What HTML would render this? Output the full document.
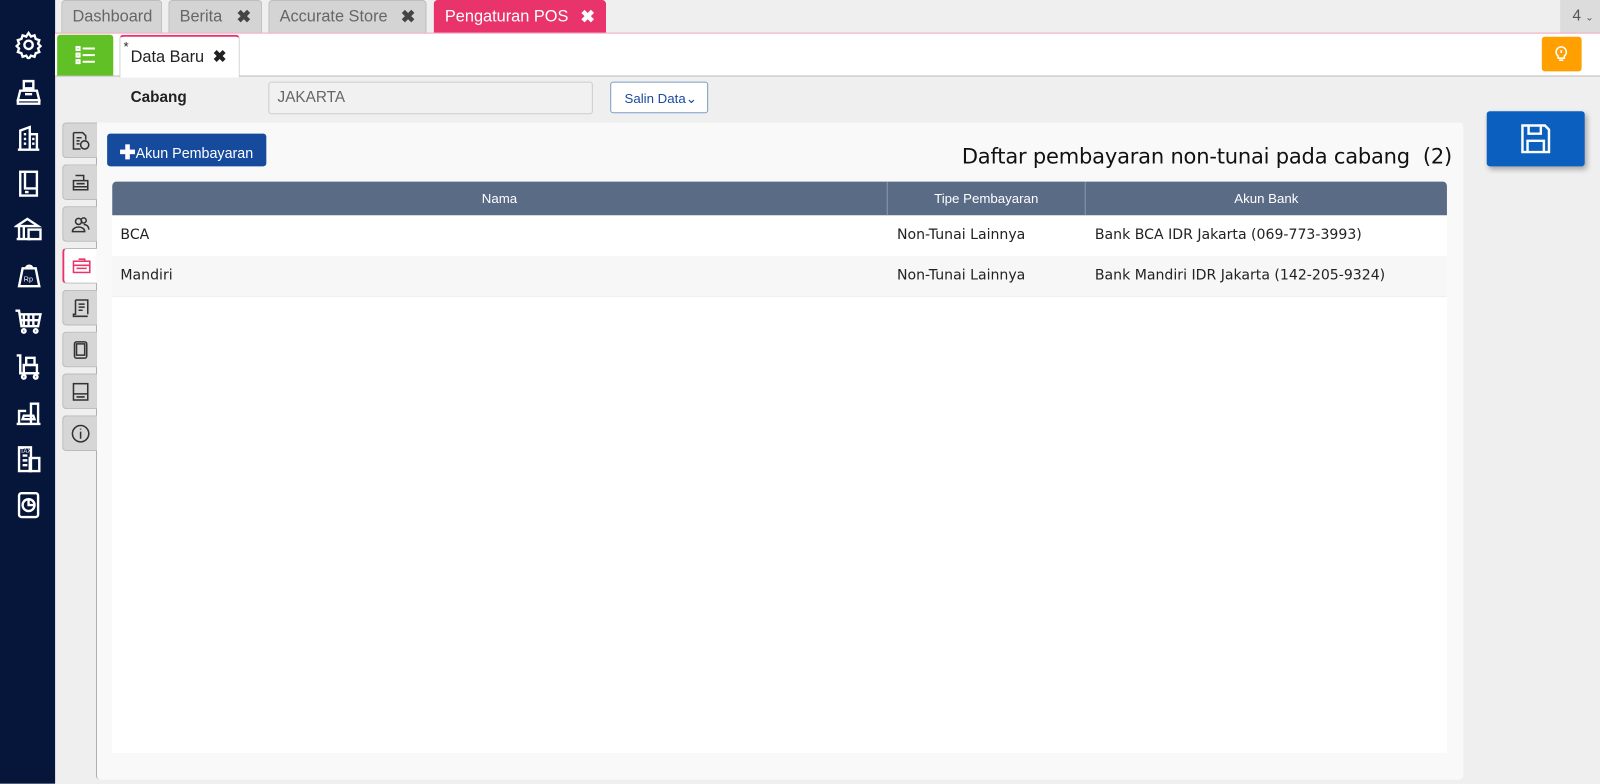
<!DOCTYPE html>
<html><head><meta charset="utf-8"><style>
*{box-sizing:border-box;margin:0;padding:0}
html,body{width:1600px;height:784px;overflow:hidden;background:#efefef}
#w{position:absolute;left:0;top:0;width:1568px;height:768px;transform:scale(1.020408);transform-origin:0 0;font-family:"Liberation Sans",sans-serif}
.abs{position:absolute}
.side{left:0;top:0;width:54px;height:768px;background:#06153a}
.side svg{position:absolute;left:14px;width:28px;height:28px;fill:none;stroke:#fff;stroke-width:2}
.tab{top:0;height:32px;background:#d4d4d4;border:1px solid #bdbdbd;border-bottom:none;border-radius:4px 4px 0 0;color:#666;font-size:16px;line-height:32px;padding-left:10px}
.tab b{position:absolute;right:10px;top:0;font-size:17px;color:#444}
.stab{left:61px;width:34px;height:35px;background:#d6d6d6;border:1px solid #bbb;border-right:none;border-radius:4px 0 0 4px}
.stab svg{position:absolute;left:7px;top:7px;width:20px;height:20px;fill:none;stroke:#333;stroke-width:1.5}
.td{position:absolute;color:#222;font-family:"DejaVu Sans","Liberation Sans",sans-serif;font-size:13.8px}
</style></head><body><div id="w">
<div class="abs side">
<svg style="top:30px" viewBox="0 0 24 24"><circle cx="12" cy="12" r="3.5"/><path d="M12 2l2 3 3-1 1 3 3 1-1 3 2 2-2 2 1 3-3 1-1 3-3-1-2 3-2-3-3 1-1-3-3-1 1-3-2-2 2-2-1-3 3-1 1-3 3 1z"/></svg>
<svg style="top:76px" viewBox="0 0 24 24"><path d="M8 3h8v6H8zM5 11h14l2 8H3zM3 19h18v3H3z"/><path d="M9 14h6"/></svg>
<svg style="top:121px" viewBox="0 0 24 24"><path d="M3 22h18M5 22V6l8-3v19M13 9h6v13M8 9h2M8 13h2M8 17h2M15 13h2M15 17h2"/></svg>
<svg style="top:166px" viewBox="0 0 24 24"><rect x="5" y="2" width="14" height="20"/><path d="M9 2v14h10M9 19h3"/></svg>
<svg style="top:211px" viewBox="0 0 24 24"><path d="M2 9l9-6 9 6zM4 9v10M8 9v10M2 20h12"/><rect x="12" y="12" width="10" height="8"/></svg>
<svg style="top:256px" viewBox="0 0 24 24"><path d="M7 6h11l3 15H4z"/><path d="M10 6c0-3 5-3 5 0"/><text x="8" y="17" font-size="6" fill="#fff" stroke="none" font-family="Liberation Sans">Rp</text></svg>
<svg style="top:301px" viewBox="0 0 24 24"><path d="M1 3h3l2 13h14l2-10H5M8 6v10M12 6v10M16 6v10M5 11h16"/><circle cx="8" cy="20" r="1.5"/><circle cx="18" cy="20" r="1.5"/></svg>
<svg style="top:346px" viewBox="0 0 24 24"><path d="M2 2h3v15h16"/><rect x="8" y="10" width="11" height="7"/><rect x="10" y="4" width="7" height="6"/><circle cx="8" cy="20" r="1.5"/><circle cx="18" cy="20" r="1.5"/></svg>
<svg style="top:391px" viewBox="0 0 24 24"><path d="M2 21h20M4 21V10h6M14 21V4h6v17"/><path d="M7 17h10l-1-3H8z"/></svg>
<svg style="top:436px" viewBox="0 0 24 24"><path d="M4 2h10v20H4zM7 9h4M7 13h4M7 17h4"/><rect x="13" y="11" width="8" height="11"/><text x="5" y="7" font-size="5" fill="#fff" stroke="none" font-family="Liberation Sans">TAX</text></svg>
<svg style="top:481px" viewBox="0 0 24 24"><rect x="4" y="2" width="16" height="20" rx="2"/><circle cx="12" cy="12" r="5"/><path d="M12 7v5h5"/></svg>
</div>
<div class="abs tab" style="left:60px;width:99px">Dashboard</div>
<div class="abs tab" style="left:165px;width:92px">Berita<b>✖</b></div>
<div class="abs tab" style="left:263px;width:155px">Accurate Store<b>✖</b></div>
<div class="abs tab" style="left:425px;width:169px;background:#e8336b;border-color:#e8336b;color:#fff">Pengaturan POS<b style="color:#fff">✖</b></div>
<div class="abs" style="left:1529px;top:0;width:40px;height:32px;background:#dcdcdc;color:#555;font-size:15px;line-height:32px;padding-left:12px">4 <span style="font-size:10px">⌄</span></div>
<div class="abs" style="left:54px;top:32px;width:1515px;height:1px;background:#f0a0b8"></div>
<div class="abs" style="left:54px;top:33px;width:1515px;height:42px;background:#fff;border-bottom:1px solid #bbb"></div>
<div class="abs" style="left:56px;top:34px;width:55px;height:40px;background:#60c025;border-radius:3px 3px 0 0">
<svg style="position:absolute;left:18px;top:11px" width="20" height="18" viewBox="0 0 20 18" fill="none" stroke="#fff" stroke-width="2"><rect x="1" y="1" width="3" height="3"/><rect x="1" y="7.5" width="3" height="3"/><rect x="1" y="14" width="3" height="3"/><path d="M7 2.5h12M7 9h12M7 15.5h12"/></svg></div>
<div class="abs" style="left:117px;top:34px;width:118px;height:42px;background:#fff;border:1px solid #ccc;border-top:2px solid #e8336b;border-bottom:none;border-radius:4px 4px 0 0;font-size:16px;color:#222;padding:10px 0 0 10px"><span style="position:absolute;left:3px;top:2px;font-size:13px">*</span>Data Baru <b style="margin-left:4px">✖</b></div>
<div class="abs" style="left:1511px;top:36px;width:39px;height:34px;background:#ffa000;border-radius:3px">
<svg style="position:absolute;left:12px;top:9px" width="14" height="16" viewBox="0 0 14 16" fill="none" stroke="#fff" stroke-width="1.6"><path d="M7 1a5 5 0 0 0-3 9v2h6v-2a5 5 0 0 0-3-9zM5 14h4M7 4v3"/></svg></div>
<div class="abs" style="left:128px;top:87px;font-size:15px;font-weight:bold;color:#222">Cabang</div>
<div class="abs" style="left:263px;top:80px;width:318px;height:32px;background:#f1f1f1;border:1px solid #ccc;border-radius:3px;font-size:15px;color:#666;padding:6px 8px">JAKARTA</div>
<div class="abs" style="left:598px;top:80px;width:96px;height:31px;background:#fff;border:1px solid #7a9cc8;border-radius:3px;font-size:13px;color:#1a4a9c;padding:8px 0 0 13px">Salin Data⌄</div>
<div class="abs" style="left:1457px;top:109px;width:96px;height:54px;background:#0b5fbf;border-radius:3px;box-shadow:2px 3px 5px rgba(0,0,0,.3)">
<svg style="position:absolute;left:33px;top:12px" width="30" height="30" viewBox="0 0 30 30" fill="none" stroke="#fff" stroke-width="2.4"><path d="M2 2h22l4 4v22H2z"/><path d="M8 2v8h12V2M7 28V17h16v11"/></svg></div>
<div class="abs" style="left:94px;top:120px;width:1340px;height:644px;background:#f9f9f9;border-left:1px solid #aaa;border-radius:0 4px 4px 4px"></div>
<div class="abs stab" style="top:120px"><svg viewBox="0 0 20 20"><path d="M3 2h9l3 3v4M3 2v16h7M6 7h5M6 10h3M6 13h3"/><circle cx="14" cy="14" r="4"/></svg></div>
<div class="abs stab" style="top:161px"><svg viewBox="0 0 20 20"><path d="M5 3h8v5M3 8h14v6H3zM3 14h14v3H3zM6 11h8"/></svg></div>
<div class="abs stab" style="top:202px"><svg viewBox="0 0 20 20"><circle cx="8" cy="7" r="3"/><circle cx="13" cy="6" r="2.5"/><path d="M2 17c0-6 12-6 12 0zM13 10c3 0 5 2 5 5"/></svg></div>
<div class="abs stab" style="top:243px;background:#fff;border-left:2px solid #e8336b"><svg viewBox="0 0 20 20" style="stroke:#e8336b"><rect x="2" y="5" width="16" height="11"/><path d="M2 9h16M7 3h6v2M5 12h10"/></svg></div>
<div class="abs stab" style="top:284px"><svg viewBox="0 0 20 20"><path d="M5 2h12v14M5 2v14h-2v2h14M8 6h6M8 9h6M8 12h4"/></svg></div>
<div class="abs stab" style="top:325px"><svg viewBox="0 0 20 20"><rect x="4" y="2" width="12" height="16" rx="2"/><path d="M6 4h8v11H6z"/></svg></div>
<div class="abs stab" style="top:366px"><svg viewBox="0 0 20 20"><rect x="3" y="2" width="14" height="16"/><path d="M3 12h14M6 15h8"/></svg></div>
<div class="abs stab" style="top:407px"><svg viewBox="0 0 20 20"><circle cx="10" cy="10" r="8"/><path d="M10 8v7M10 5v1"/></svg></div>
<div class="abs" style="left:105px;top:131px;width:156px;height:32px;background:#164a9c;border-radius:3px;color:#fff;font-size:14px;padding:7px 0 0 12px"><b style="font-size:19px;position:relative;top:1px">✚</b>Akun Pembayaran</div>
<div class="abs" style="right:145px;top:141px;font-size:20.6px;color:#111;font-family:'DejaVu Sans','Liberation Sans',sans-serif;letter-spacing:-0.2px">Daftar pembayaran non-tunai pada cabang&nbsp; (2)</div>
<div class="abs" style="left:110px;top:178px;width:1308px;height:560px;background:#fff"></div>
<div class="abs" style="left:110px;top:178px;width:1308px;height:33px;background:#5a6b85;border-radius:4px 4px 0 0;color:#fff;font-size:13px">
<div class="abs" style="left:0;width:759px;text-align:center;top:9px">Nama</div>
<div class="abs" style="left:759px;width:194px;text-align:center;border-left:1px solid #8898b0;height:33px;top:0;padding-top:9px">Tipe Pembayaran</div>
<div class="abs" style="left:953px;width:355px;text-align:center;border-left:1px solid #8898b0;height:33px;top:0;padding-top:9px">Akun Bank</div>
</div>
<div class="abs" style="left:110px;top:251px;width:1308px;height:40px;background:#f7f7f7;border-bottom:1px solid #eee"></div>
<div class="td" style="left:118px;top:222px">BCA</div>
<div class="td" style="left:879px;top:222px">Non-Tunai Lainnya</div>
<div class="td" style="left:1073px;top:222px">Bank BCA IDR Jakarta (069-773-3993)</div>
<div class="td" style="left:118px;top:262px">Mandiri</div>
<div class="td" style="left:879px;top:262px">Non-Tunai Lainnya</div>
<div class="td" style="left:1073px;top:262px">Bank Mandiri IDR Jakarta (142-205-9324)</div>
</div></body></html>
